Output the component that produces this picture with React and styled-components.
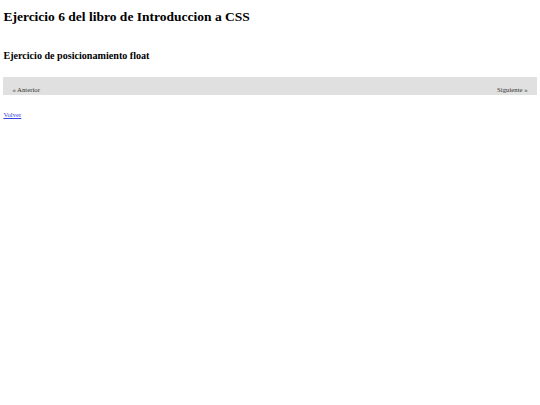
import React from "react";
import styled, { createGlobalStyle } from "styled-components";

const Global = createGlobalStyle`
  body {
    margin: 0;
    font-family: "Liberation Serif", "Times New Roman", serif;
    font-size: 6.75px;
    color: #000;
    background: #fff;
  }
`;

const Page = styled.div`
  padding: 0 3.4px;
`;

const Title = styled.h1`
  font-size: 13.5px;
  font-weight: bold;
  line-height: 15.5px;
  margin: 0;
  padding-top: 8.7px;
`;

const Subtitle = styled.h2`
  font-size: 10.125px;
  font-weight: bold;
  line-height: 11.6px;
  margin: 25.6px 0 0;
`;

const Nav = styled.div`
  display: flex;
  justify-content: space-between;
  align-items: flex-end;
  background: #e0e0e0;
  height: 18px;
  padding: 0 9px 1.6px;
  box-sizing: border-box;
  margin-top: 15.6px;
`;

const NavLink = styled.span`
  line-height: 7.8px;
  color: #333;
`;

const Back = styled.a`
  display: block;
  width: max-content;
  line-height: 7.8px;
  margin-top: 16.4px;
  color: #3344dd;
`;

export default function App() {
  return (
    <Page>
      <Global />
      <Title>Ejercicio 6 del libro de Introduccion a CSS</Title>
      <Subtitle>Ejercicio de posicionamiento float</Subtitle>
      <Nav>
        <NavLink>« Anterior</NavLink>
        <NavLink>Siguiente »</NavLink>
      </Nav>
      <Back href="#">Volver</Back>
    </Page>
  );
}
